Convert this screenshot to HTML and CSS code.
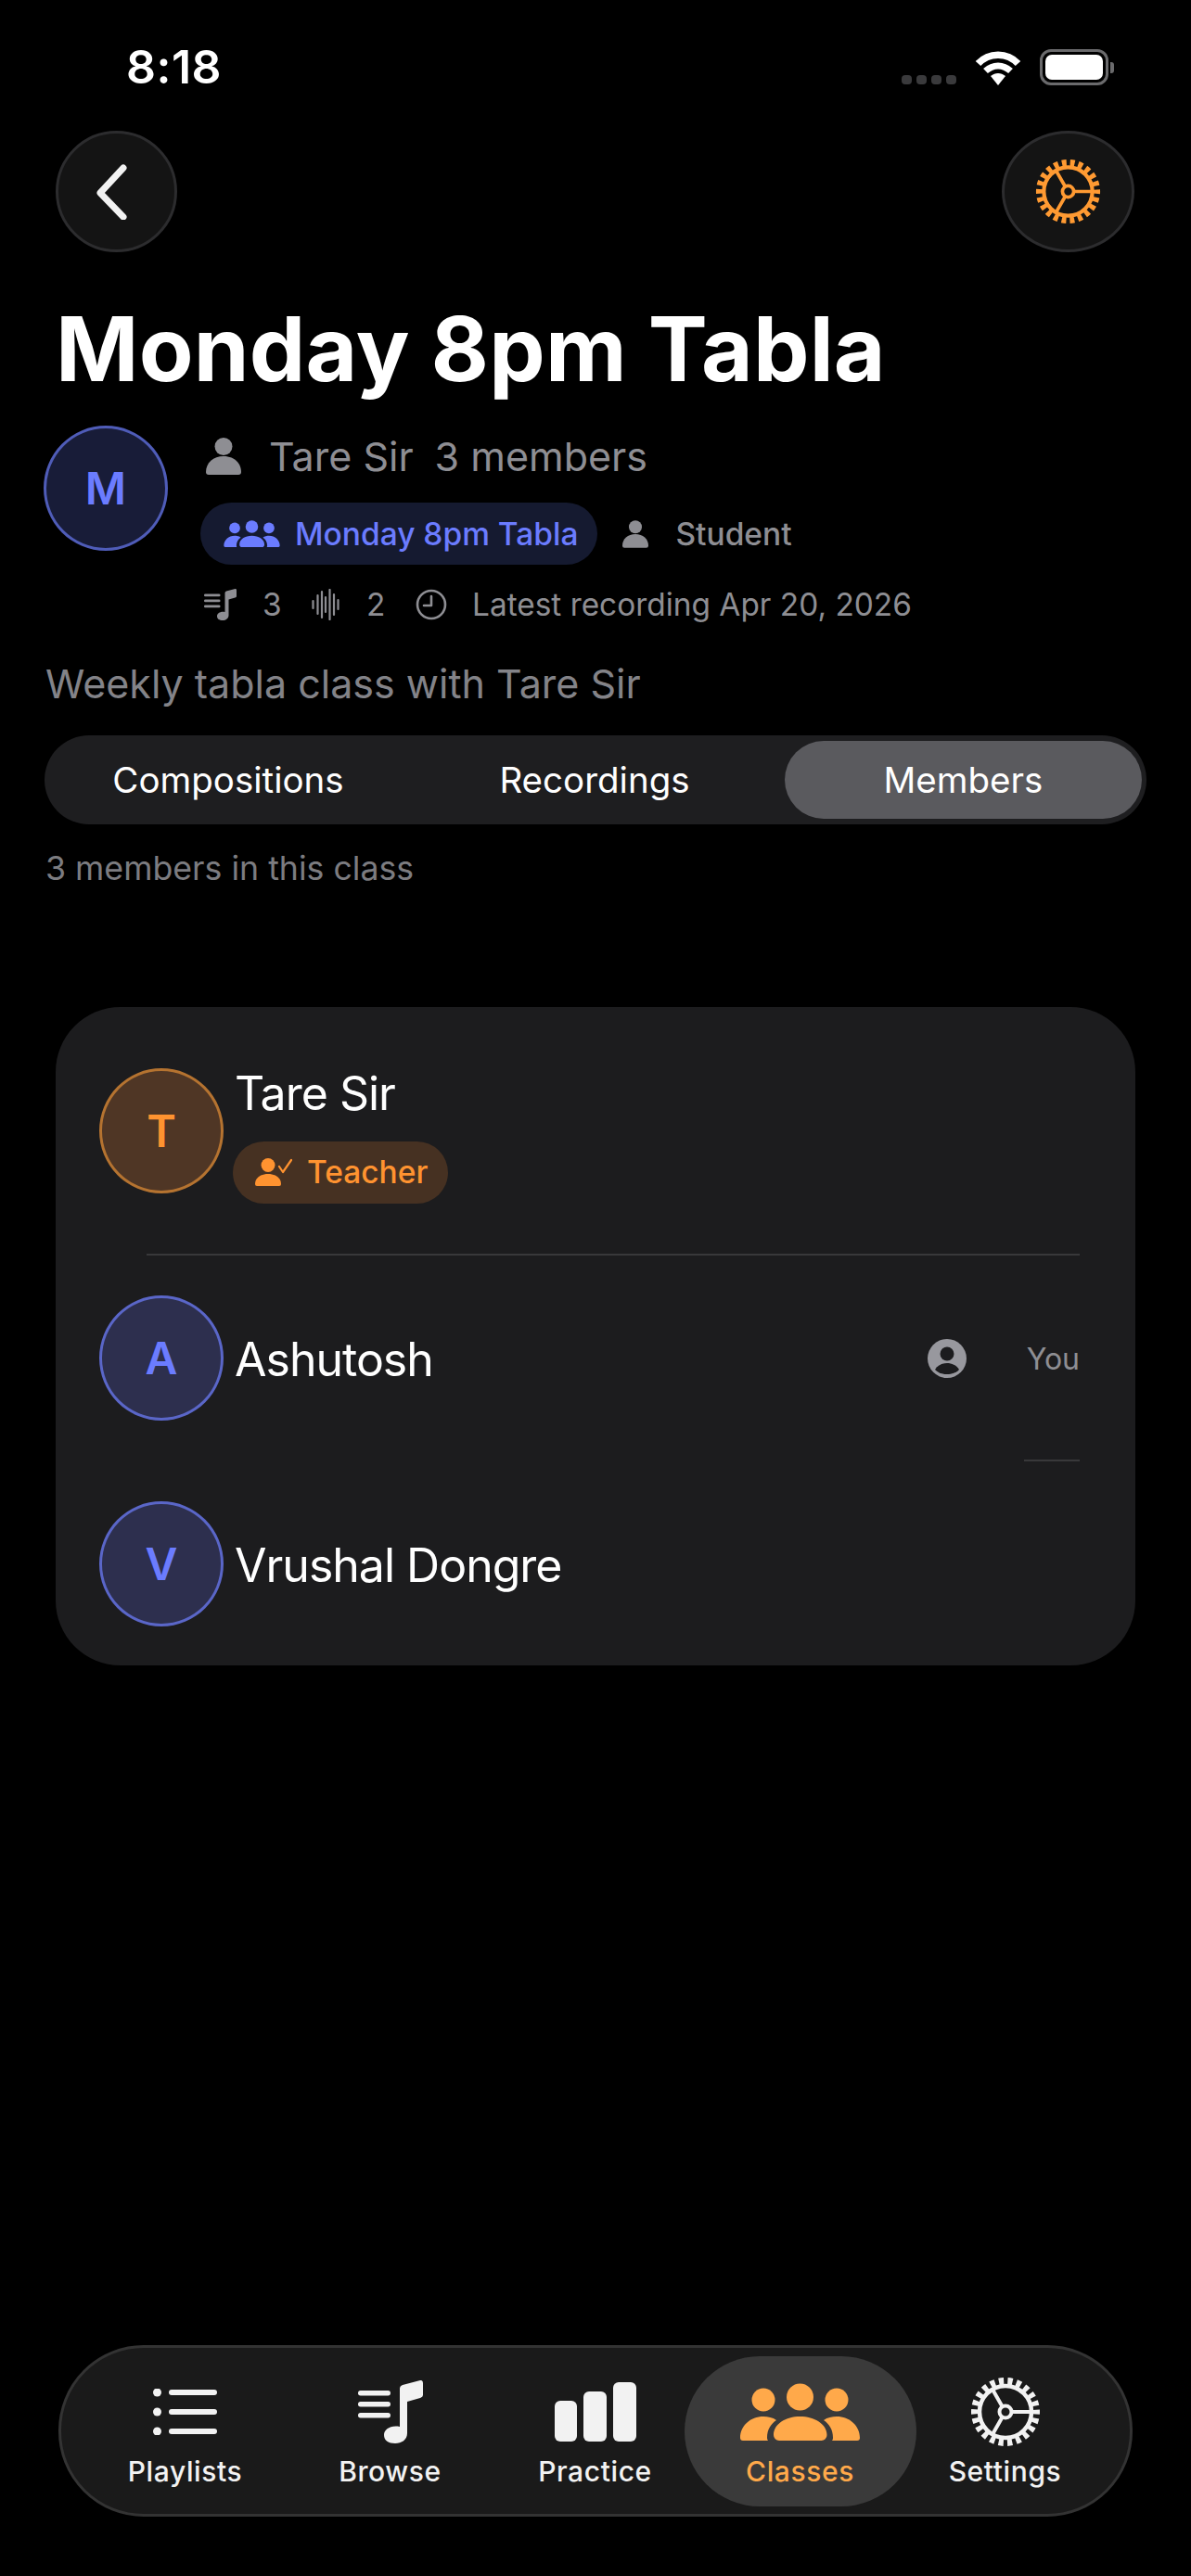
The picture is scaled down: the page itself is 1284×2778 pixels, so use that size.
FILE: index.html
```html
<!DOCTYPE html>
<html lang="en">
<head>
    <meta charset="UTF-8">
    <meta name="viewport" content="width=device-width, initial-scale=1.0">
    <title>Monday 8pm Tabla</title>
    <link rel="stylesheet" href="styles.css">
</head>
<body>
    <svg class="defs" width="0" height="0">
        <symbol id="person" viewBox="0 0 38 40">
            <circle cx="19" cy="9.5" r="9.5"/>
            <path d="M3 40a3 3 0 0 1-3-3c0-10 8-17 19-17s19 7 19 17a3 3 0 0 1-3 3z"/>
        </symbol>
        <symbol id="people" viewBox="0 0 129 62">
            <circle cx="64.5" cy="15" r="14.5"/>
            <circle cx="25" cy="18" r="12.5"/>
            <circle cx="104" cy="18" r="12.5"/>
            <path d="M42 62a6 6 0 0 1-6-6c0-12 13-20 28.5-20s29 8 29 20a6 6 0 0 1-6 6z"/>
            <path d="M3 62a3 3 0 0 1-3-3C0 46 11 36 25 36c5 0 10 1 14 4-6 4-10 10-10 19q0 2 1 3z"/>
            <path d="M126 62a3 3 0 0 0 3-3c0-13-11-23-25-23-5 0-10 1-14 4 6 4 10 10 10 19q0 2-1 3z"/>
        </symbol>
        <symbol id="gear" viewBox="0 0 76 76">
            <g fill="none" stroke="currentColor">
                <circle cx="38" cy="38" r="33" stroke-width="8" stroke-dasharray="5.2 4.225" stroke-dashoffset="2.6"/>
                <circle cx="38" cy="38" r="28" stroke-width="4.5"/>
                <circle cx="38" cy="38" r="6.5" stroke-width="4"/>
                <path stroke-width="4" d="M44.5 38H66M34.7 32.4 24 13.8M34.7 43.6 24 62.2"/>
            </g>
        </symbol>
        <symbol id="notes" viewBox="0 0 70 68">
            <rect x="0" y="11" width="35" height="5.5" rx="2.7"/>
            <rect x="0" y="23" width="35" height="5.5" rx="2.7"/>
            <rect x="0" y="35" width="35" height="5.5" rx="2.7"/>
            <path d="M45 9q0-3 3-4l19-5q3-.5 3 3v13q0 2-3 3l-14 4v34c0 7-6 11-13 11s-12-3-12-9c0-6 7-11 17-9z"/>
        </symbol>
    </svg>

    <div class="page">
        <div class="status">
            <span class="time">8:18</span>
            <div class="status-icons">
                <div class="signal"><i></i><i></i><i></i><i></i></div>
                <svg class="wifi" viewBox="0 0 50 37" fill="none" stroke="#fff">
                    <path stroke-width="7.5" d="M3.5 13.5C15 1 35 1 46.5 13.5"/>
                    <path stroke-width="7" d="M11.5 21.5c8-7.5 19-7.5 27 0"/>
                    <path stroke="none" fill="#fff" d="M17 27c5-4 11-4 16 0l-8 10z"/>
                </svg>
                <div class="battery"><div class="battery-level"></div></div>
                <div class="battery-nub"></div>
            </div>
        </div>

        <div class="topbar">
            <button class="round-btn">
                <svg class="chevron" viewBox="0 0 34 60" fill="none" stroke="#f2f2f2" stroke-width="7" stroke-linecap="round" stroke-linejoin="round">
                    <path d="M30 4 5 31l25 26"/>
                </svg>
            </button>
            <button class="round-btn settings-btn">
                <svg class="gear-icon"><use href="#gear"/></svg>
            </button>
        </div>

        <h1 class="title">Monday 8pm Tabla</h1>

        <div class="class-head">
            <div class="avatar avatar-dark">M</div>
            <div class="class-info">
                <div class="info-line owner-line">
                    <svg class="icon-owner"><use href="#person"/></svg>
                    <span>Tare Sir</span>
                    <span class="owner-count">3 members</span>
                </div>
                <div class="info-line chip-line">
                    <div class="chip">
                        <svg class="icon-chip"><use href="#people"/></svg>
                        <span>Monday 8pm Tabla</span>
                    </div>
                    <svg class="icon-role"><use href="#person"/></svg>
                    <span class="role">Student</span>
                </div>
                <div class="info-line stats-line">
                    <svg class="icon-stat-notes"><use href="#notes"/></svg>
                    <span class="stat-num">3</span>
                    <svg class="icon-wave" viewBox="0 0 30 34" fill="none" stroke="#8e8e93" stroke-width="2.2" stroke-linecap="round">
                        <path d="M1.5 13v8M6.5 7v20M11 3v28M15 9v16M19.5 1v32M24 6v22M28.5 12v10"/>
                    </svg>
                    <span class="stat-num">2</span>
                    <svg class="icon-clock" viewBox="0 0 34 34" fill="none" stroke="#8e8e93" stroke-width="2.6" stroke-linecap="round" stroke-linejoin="round">
                        <circle cx="17" cy="17" r="15"/>
                        <path d="M17 8v10h-8"/>
                    </svg>
                    <span class="latest">Latest recording Apr 20, 2026</span>
                </div>
            </div>
        </div>

        <p class="description">Weekly tabla class with Tare Sir</p>

        <div class="segments">
            <div class="segment">Compositions</div>
            <div class="segment">Recordings</div>
            <div class="segment segment-active">Members</div>
        </div>

        <p class="count">3 members in this class</p>

        <div class="card">
            <div class="member">
                <div class="avatar avatar-orange">T</div>
                <div class="member-text">
                    <div class="member-name">Tare Sir</div>
                    <div class="teacher-pill">
                        <svg class="icon-teacher" viewBox="0 0 40 30">
                            <circle cx="14" cy="7.5" r="7.5" fill="#ff9330"/>
                            <path fill="#ff9330" d="M2 30a2 2 0 0 1-2-2c0-7 6-11 14-11s14 4 14 11a2 2 0 0 1-2 2z"/>
                            <path fill="none" stroke="#ff9330" stroke-width="2.2" stroke-linecap="round" stroke-linejoin="round" d="M26 9l4 6 9-13"/>
                        </svg>
                        <span>Teacher</span>
                    </div>
                </div>
            </div>
            <div class="divider"></div>
            <div class="member">
                <div class="avatar avatar-blue">A</div>
                <div class="member-name">Ashutosh</div>
                <svg class="icon-you" viewBox="0 0 42 42">
                    <circle cx="21" cy="21" r="21" fill="#98989e"/>
                    <circle cx="21" cy="16" r="7.5" fill="#1c1c1e"/>
                    <path fill="#1c1c1e" d="M8 33c3-5 8-7 13-7s10 2 13 7c-3 3.5-8 5-13 5s-10-1.5-13-5z"/>
                </svg>
                <span class="you">You</span>
            </div>
            <div class="divider divider-short"></div>
            <div class="member">
                <div class="avatar avatar-blue">V</div>
                <div class="member-name">Vrushal Dongre</div>
            </div>
        </div>

        <nav class="tabbar">
            <div class="tab">
                <div class="tab-icon">
                    <svg class="icon-playlists" viewBox="0 0 69 50" fill="#f2f2f2">
                        <circle cx="4.5" cy="4" r="4.5"/>
                        <circle cx="4.5" cy="25" r="4.5"/>
                        <circle cx="4.5" cy="46" r="4.5"/>
                        <rect x="17" y="1" width="52" height="6" rx="3"/>
                        <rect x="17" y="22" width="52" height="6" rx="3"/>
                        <rect x="17" y="43" width="52" height="6" rx="3"/>
                    </svg>
                </div>
                <span>Playlists</span>
            </div>
            <div class="tab">
                <div class="tab-icon"><svg class="icon-browse"><use href="#notes"/></svg></div>
                <span>Browse</span>
            </div>
            <div class="tab">
                <div class="tab-icon">
                    <svg class="icon-practice" viewBox="0 0 88 64" fill="#f2f2f2">
                        <rect x="0" y="20" width="24" height="44" rx="6"/>
                        <rect x="31" y="10" width="25" height="54" rx="6"/>
                        <rect x="63" y="0" width="25" height="64" rx="6"/>
                    </svg>
                </div>
                <span>Practice</span>
            </div>
            <div class="tab tab-active">
                <div class="tab-icon"><svg class="icon-classes"><use href="#people"/></svg></div>
                <span>Classes</span>
            </div>
            <div class="tab">
                <div class="tab-icon"><svg class="icon-settings"><use href="#gear"/></svg></div>
                <span>Settings</span>
            </div>
        </nav>
    </div>
</body>
</html>
```

FILE: styles.css
```css
* {
    box-sizing: border-box;
}
body {
    margin: 0;
    background-color: #000;
    font-family: Inter, "Noto Sans", sans-serif;
    color: #fff;
}
.defs {
    display: block;
    height: 0;
}
.page {
    width: 1284px;
    height: 2778px;
    display: flex;
    flex-direction: column;
    overflow: hidden;
}

/* status bar */
.status {
    height: 141px;
    padding: 42px 83px 0 136px;
    display: flex;
    justify-content: space-between;
    align-items: flex-start;
}
.time {
    font-size: 50px;
    line-height: 60px;
    font-weight: 600;
    letter-spacing: 0.5px;
}
.status-icons {
    display: flex;
    align-items: flex-end;
    padding-top: 11px;
}
.signal {
    display: flex;
    gap: 5px;
    margin-right: 20px;
    margin-bottom: 1px;
}
.signal i {
    width: 11px;
    height: 10px;
    border-radius: 4px;
    background-color: #3a3a3c;
}
.wifi {
    width: 50px;
    height: 37px;
    margin-right: 20px;
}
.battery {
    width: 74px;
    height: 39px;
    padding: 3px;
    border: 3px solid #6a6a6c;
    border-radius: 12px;
}
.battery-level {
    width: 100%;
    height: 100%;
    background-color: #fff;
    border-radius: 7px;
}
.battery-nub {
    width: 4px;
    height: 12px;
    margin: 0 0 13px 2px;
    background-color: #6a6a6c;
    border-radius: 0 3px 3px 0;
}

/* top buttons */
.topbar {
    padding: 0 61px 0 60px;
    display: flex;
    justify-content: space-between;
}
.round-btn {
    width: 131px;
    height: 131px;
    padding: 0;
    display: flex;
    align-items: center;
    justify-content: center;
    background-color: #141414;
    border: 3px solid #2c2c2e;
    border-radius: 50%;
}
.settings-btn {
    width: 143px;
}
.chevron {
    width: 34px;
    height: 60px;
    margin-right: 12px;
}
.gear-icon {
    width: 71px;
    height: 71px;
    color: #ff9a32;
}
.title {
    margin: 46px 0 25px 60px;
    font-size: 96px;
    line-height: 116px;
    font-weight: 700;
    letter-spacing: 0.2px;
}

/* class header */
.class-head {
    padding-left: 47px;
    display: flex;
}
.avatar {
    flex: none;
    width: 134px;
    height: 135px;
    display: flex;
    align-items: center;
    justify-content: center;
    border: 3px solid;
    border-radius: 50%;
    font-size: 48px;
    font-weight: 600;
}
.avatar-dark {
    background-color: #181c38;
    border-color: #4f5cb8;
    color: #6b7cff;
}
.avatar-blue {
    background-color: #2d2f4e;
    border-color: #5a66c8;
    color: #6b7cff;
}
.avatar-orange {
    background-color: #4f3625;
    border-color: #b57330;
    color: #ff9330;
}
.class-info {
    margin-left: 35px;
    color: #8e8e93;
}
.info-line {
    display: flex;
    align-items: center;
}
.owner-line {
    height: 52px;
    margin-top: 7px;
    padding-left: 6px;
    font-size: 43px;
}
.owner-count {
    margin-left: 23px;
}
.icon-owner {
    width: 38px;
    height: 40px;
    margin-right: 30px;
    fill: #8e8e93;
}
.chip-line {
    margin-top: 24px;
    font-size: 33.5px;
    font-weight: 500;
}
.chip {
    height: 67px;
    padding: 0 21px 0 25px;
    display: flex;
    align-items: center;
    background-color: #151a30;
    border-radius: 34px;
    color: #6b7cff;
}
.icon-chip {
    width: 61px;
    height: 29px;
    margin-right: 16px;
    fill: #6b7cff;
}
.icon-role {
    width: 28px;
    height: 30px;
    margin: 0 29px 0 27px;
    fill: #8e8e93;
}
.stats-line {
    height: 40px;
    margin-top: 23px;
    padding-left: 4px;
    font-size: 33.4px;
}
.icon-stat-notes {
    width: 35px;
    height: 34px;
    margin-right: 28px;
    fill: #8e8e93;
}
.stat-num {
    width: 17px;
}
.icon-wave {
    width: 30px;
    height: 34px;
    margin: 0 29px 0 36px;
}
.icon-clock {
    width: 34px;
    height: 34px;
    margin: 0 27px 0 36px;
}
.description {
    margin: 37px 0 0 49px;
    font-size: 43px;
    line-height: 56px;
    color: #838388;
}

/* segmented control */
.segments {
    margin: 28px 48px 0;
    height: 96px;
    padding: 6px 5px 6px 0;
    display: grid;
    grid-template-columns: 396px 394px 1fr;
    background-color: #1e1e20;
    border-radius: 48px;
}
.segment {
    display: flex;
    align-items: center;
    justify-content: center;
    font-size: 38.5px;
    font-weight: 400;
    border-radius: 42px;
}
.segment-active {
    margin-left: 8px;
    background-color: #5a5a5e;
}
.count {
    margin: 25px 0 0 49px;
    font-size: 35.7px;
    line-height: 44px;
    color: #7c7c80;
}

/* member card */
.card {
    margin: 128px 60px 0;
    background-color: #1c1c1e;
    border-radius: 70px;
}
.member {
    height: 220px;
    padding: 0 60px 0 47px;
    display: flex;
    align-items: center;
}
.member:first-child {
    height: 266px;
}
.member .avatar {
    margin-right: 12px;
}
.member-name {
    margin-top: 4px;
    font-size: 50px;
    line-height: 62px;
    letter-spacing: -1px;
}
.member-text {
    display: flex;
    flex-direction: column;
    margin-top: 3px;
}
.teacher-pill {
    width: 232px;
    height: 67px;
    margin-top: 21px;
    margin-left: -2px;
    padding-left: 24px;
    display: flex;
    align-items: center;
    background-color: #463122;
    border-radius: 34px;
    color: #ff9330;
    font-size: 33.5px;
    font-weight: 500;
}
.icon-teacher {
    width: 40px;
    height: 30px;
    margin-right: 16px;
}
.icon-you {
    width: 42px;
    height: 42px;
    margin-top: 2px;
    margin-left: auto;
}
.you {
    margin-top: 3px;
    margin-left: 65px;
    font-size: 32px;
    color: #8e8e93;
}
.divider {
    height: 2px;
    margin: 0 60px 0 98px;
    background-color: #38383a;
}
.divider-short {
    width: 60px;
    margin-left: auto;
}

/* tab bar */
.tabbar {
    margin: auto 63px 64px;
    height: 185px;
    padding: 9px 23px 8px;
    display: flex;
    background-color: #1a1a1a;
    border: 3px solid #333;
    border-radius: 92px;
}
.tab {
    width: 221px;
    display: flex;
    flex-direction: column;
    align-items: center;
    color: #f2f2f2;
    font-size: 30px;
    font-weight: 500;
    letter-spacing: 0.6px;
}
.tab-active {
    width: 250px;
    margin: 0 -14.5px;
    background-color: #3a3a3a;
    border-radius: 81px;
    color: #ffa94a;
}
.tab-icon {
    height: 76px;
    margin-top: 22px;
    margin-bottom: 8px;
    display: flex;
    align-items: center;
    justify-content: center;
}
.icon-playlists {
    width: 69px;
    height: 50px;
}
.icon-browse {
    width: 70px;
    height: 68px;
    fill: #f2f2f2;
}
.icon-practice {
    width: 88px;
    height: 64px;
}
.icon-classes {
    width: 129px;
    height: 62px;
    fill: #ffa94a;
}
.icon-settings {
    width: 76px;
    height: 76px;
    color: #f2f2f2;
}
```
